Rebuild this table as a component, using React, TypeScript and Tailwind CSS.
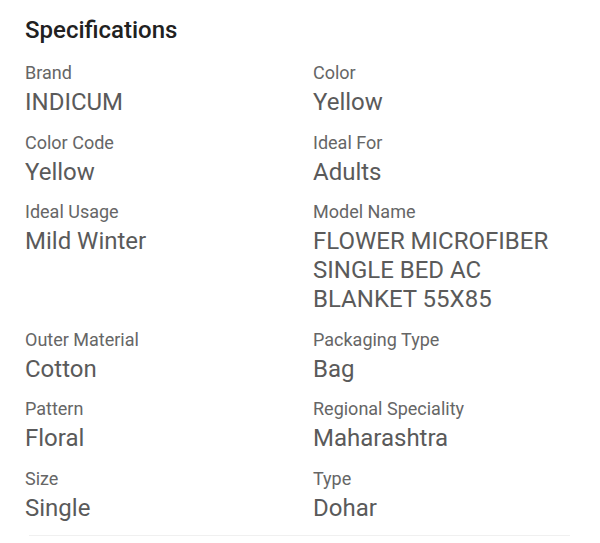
const specs: [string, string][] = [
  ["Brand", "INDICUM"],
  ["Color", "Yellow"],
  ["Color Code", "Yellow"],
  ["Ideal For", "Adults"],
  ["Ideal Usage", "Mild Winter"],
  ["Model Name", "FLOWER MICROFIBER SINGLE BED AC BLANKET 55X85"],
  ["Outer Material", "Cotton"],
  ["Packaging Type", "Bag"],
  ["Pattern", "Floral"],
  ["Regional Speciality", "Maharashtra"],
  ["Size", "Single"],
  ["Type", "Dohar"],
];

export default function App() {
  return (
    <div className="w-[600px] h-[543px] bg-white font-['Roboto',sans-serif] overflow-hidden">
      <div className="pl-[25px] pt-[16px]">
        <h2 className="text-[24px] leading-[28px] font-medium text-[#212121]">Specifications</h2>
        <div className="mt-[17px] grid grid-cols-[288px_256px] gap-y-[13.5px]">
          {specs.map(([label, value]) => (
            <div key={label}>
              <div className="text-[18px] leading-[23px] text-[#666666]">{label}</div>
              <div className="mt-[4px] text-[24px] leading-[29px] text-[#5a5a5a]">{value}</div>
            </div>
          ))}
        </div>
      </div>
      <div className="ml-[29px] mr-[30px] mt-[12px] h-px bg-[#f0f0f0]" />
    </div>
  );
}
